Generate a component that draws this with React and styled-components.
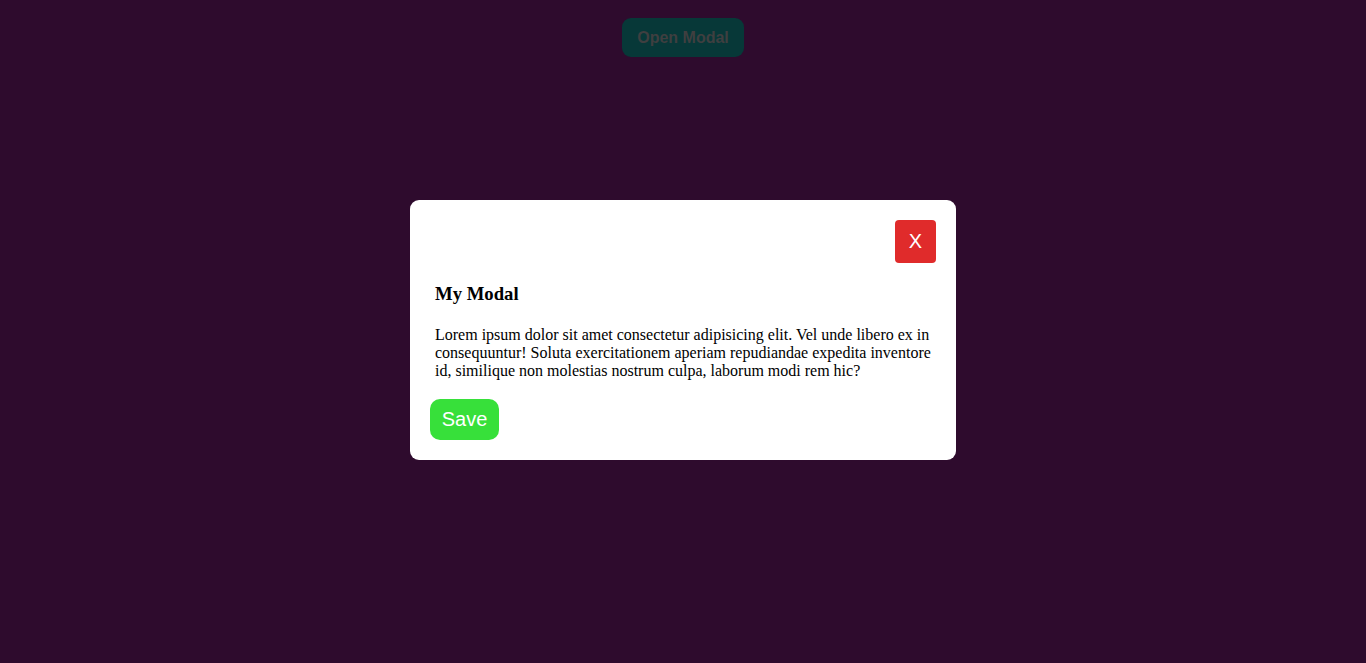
import React, { useState } from 'react';
import styled, { createGlobalStyle } from 'styled-components';

const GlobalStyle = createGlobalStyle`
  html, body {
    margin: 0;
    padding: 0;
    height: 100%;
  }

  body {
    background: #2e0b2d;
    font-family: "Liberation Serif", "Times New Roman", serif;
  }
`;

const Page = styled.div`
  min-height: 100vh;
  display: flex;
  flex-direction: column;
  align-items: center;
  padding-top: 18px;
  box-sizing: border-box;
`;

const OpenButton = styled.button`
  width: 122px;
  height: 39px;
  border: none;
  border-radius: 9px;
  background: #073838;
  color: #3f3f40;
  font-family: "Liberation Sans", Arial, sans-serif;
  font-weight: 700;
  font-size: 16px;
  cursor: pointer;
`;

const Overlay = styled.div`
  position: fixed;
  inset: 0;
  display: flex;
  align-items: center;
  justify-content: center;
`;

const ModalBox = styled.div`
  width: 546px;
  box-sizing: border-box;
  background: #ffffff;
  border-radius: 9px;
  padding: 20px;
  margin-top: -3px;
`;

const Header = styled.div`
  display: flex;
  justify-content: flex-end;
`;

const CloseButton = styled.button`
  width: 41px;
  height: 43px;
  border: none;
  border-radius: 4px;
  background: #e02b2b;
  color: #ffffff;
  font-family: "Liberation Sans", Arial, sans-serif;
  font-size: 20px;
  cursor: pointer;
`;

const Body = styled.div`
  padding: 0 5px;

  h3 {
    font-size: 18.72px;
    margin: 20px 0 21.72px;
  }

  p {
    font-size: 16px;
    margin: 0 0 19px;
    line-height: 18px;
  }
`;

const SaveButton = styled.button`
  width: 69px;
  height: 41px;
  border: none;
  border-radius: 10px;
  background: #37e03a;
  color: #ffffff;
  font-family: "Liberation Sans", Arial, sans-serif;
  font-size: 20px;
  cursor: pointer;
`;

const App = () => {
  const [open, setOpen] = useState(true);

  return (
    <>
      <GlobalStyle />
      <Page>
        <OpenButton onClick={() => setOpen(true)}>Open Modal</OpenButton>
      </Page>
      {open && (
        <Overlay>
          <ModalBox>
            <Header>
              <CloseButton onClick={() => setOpen(false)}>X</CloseButton>
            </Header>
            <Body>
              <h3>My Modal</h3>
              <p>
                Lorem ipsum dolor sit amet consectetur adipisicing elit. Vel unde libero ex in consequuntur! Soluta
                exercitationem aperiam repudiandae expedita inventore id, similique non molestias nostrum culpa,
                laborum modi rem hic?
              </p>
            </Body>
            <SaveButton>Save</SaveButton>
          </ModalBox>
        </Overlay>
      )}
    </>
  );
};

export default App;
